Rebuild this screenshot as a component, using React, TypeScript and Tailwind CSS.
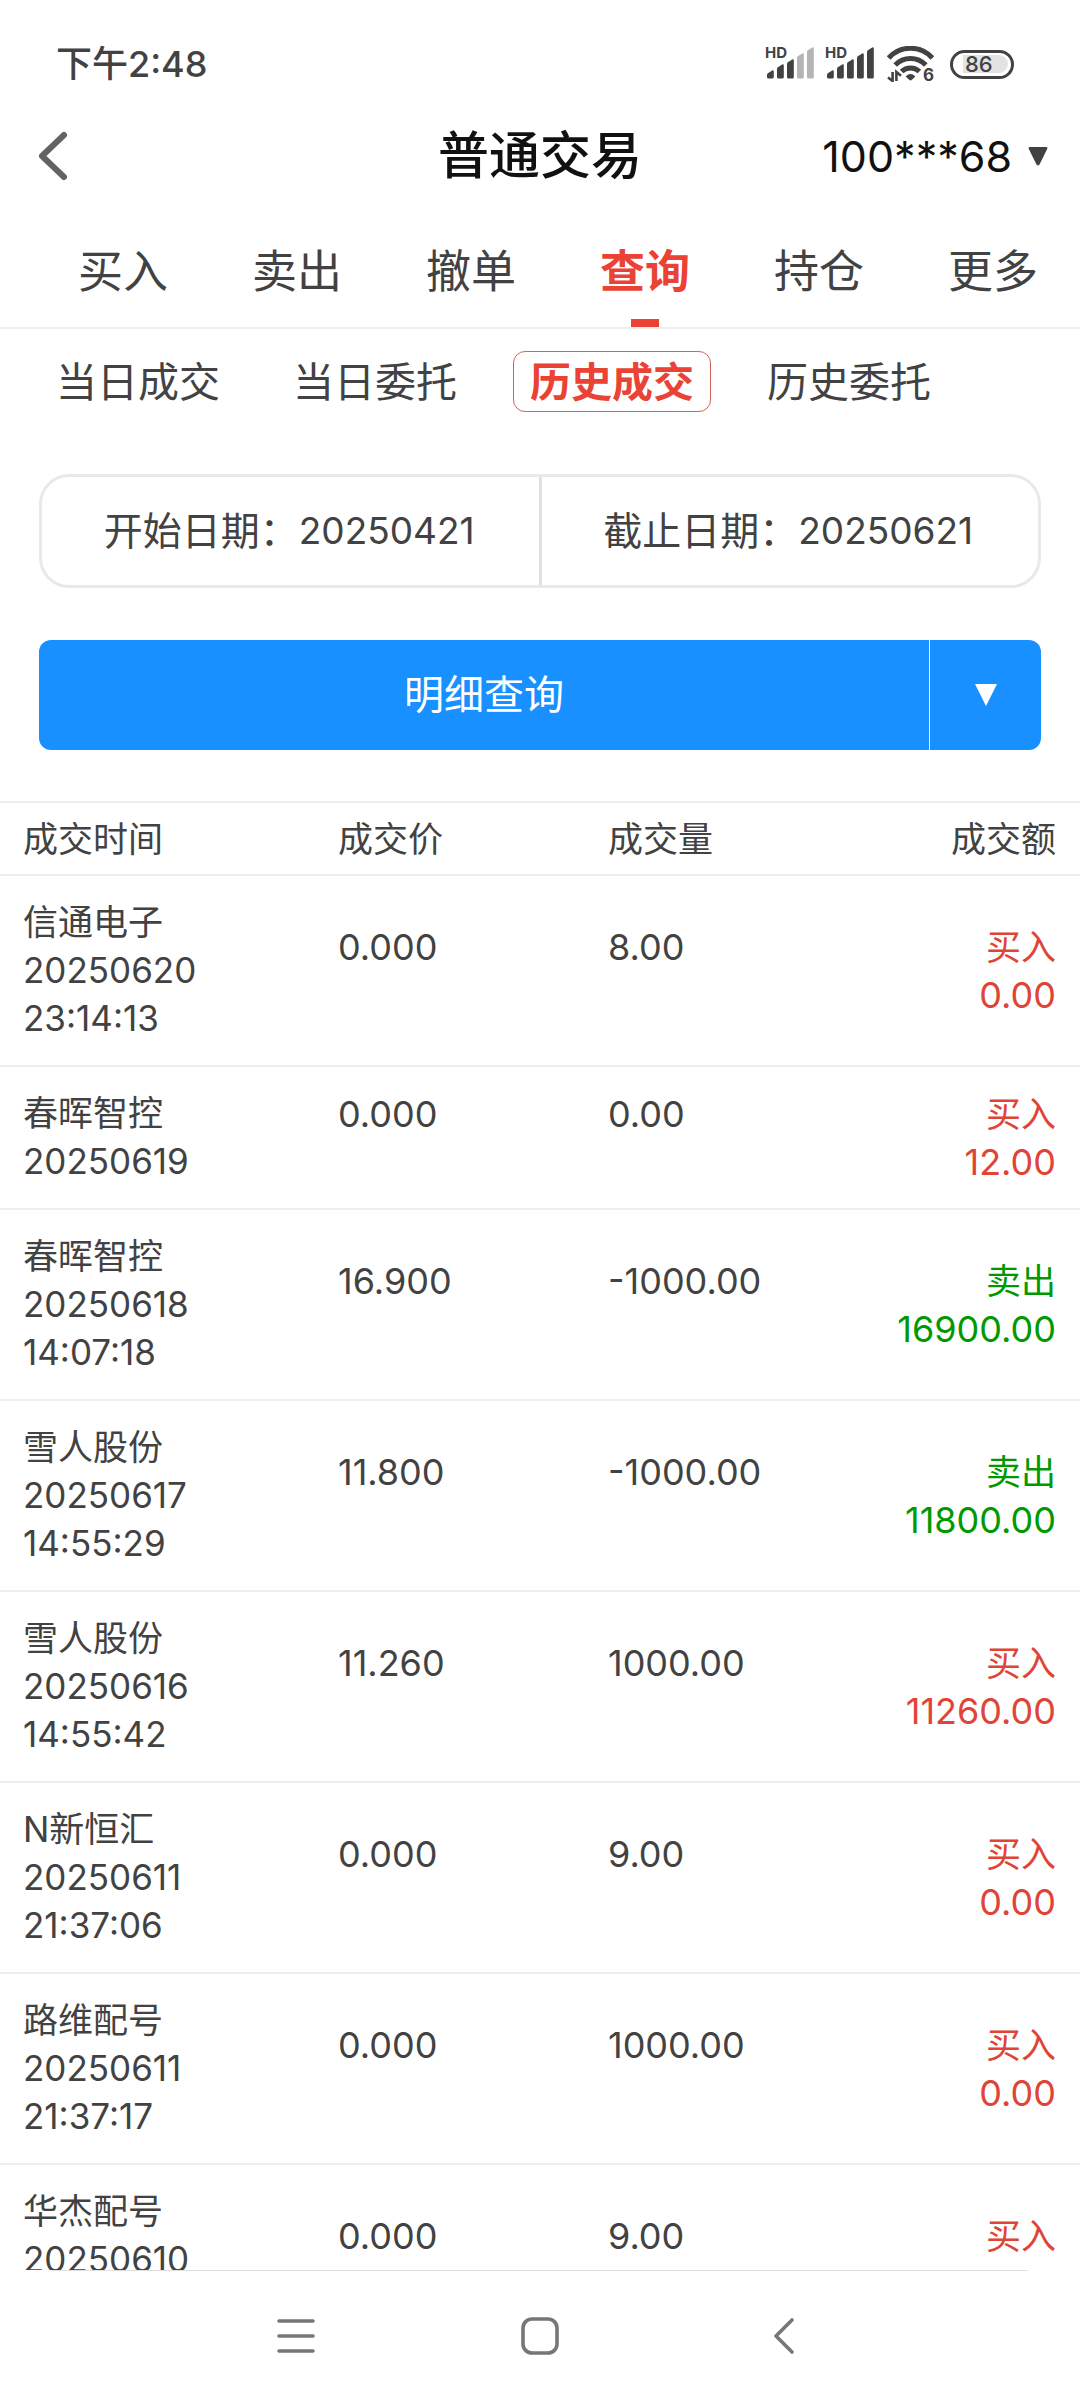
import React from 'react';

type Side = 'buy' | 'sell';

interface Trade {
  name: string;
  date: string;
  time?: string;
  price: string;
  volume: string;
  side: Side;
  amount: string;
}

const MAIN_TABS = ['买入', '卖出', '撤单', '查询', '持仓', '更多'];
const SUB_TABS = ['当日成交', '当日委托', '历史成交', '历史委托'];

const TRADES: Trade[] = [
  { name: '信通电子', date: '20250620', time: '23:14:13', price: '0.000', volume: '8.00', side: 'buy', amount: '0.00' },
  { name: '春晖智控', date: '20250619', price: '0.000', volume: '0.00', side: 'buy', amount: '12.00' },
  { name: '春晖智控', date: '20250618', time: '14:07:18', price: '16.900', volume: '-1000.00', side: 'sell', amount: '16900.00' },
  { name: '雪人股份', date: '20250617', time: '14:55:29', price: '11.800', volume: '-1000.00', side: 'sell', amount: '11800.00' },
  { name: '雪人股份', date: '20250616', time: '14:55:42', price: '11.260', volume: '1000.00', side: 'buy', amount: '11260.00' },
  { name: 'N新恒汇', date: '20250611', time: '21:37:06', price: '0.000', volume: '9.00', side: 'buy', amount: '0.00' },
  { name: '路维配号', date: '20250611', time: '21:37:17', price: '0.000', volume: '1000.00', side: 'buy', amount: '0.00' },
  { name: '华杰配号', date: '20250610', time: '21:36:42', price: '0.000', volume: '9.00', side: 'buy', amount: '0.00' },
];

function Signal({ level }: { level: number }) {
  const bars = [
    { x: 2, top: 24 },
    { x: 12, top: 18 },
    { x: 22, top: 13 },
    { x: 32, top: 7 },
    { x: 42, top: 1 },
  ];
  return (
    <span className="relative block h-9 w-[50px]">
      <svg viewBox="0 0 50 36" className="h-9 w-[50px]" aria-hidden="true">
        {bars.map((b, i) => (
          <path
            key={b.x}
            d={`M${b.x} ${b.top + 5} Q${b.x} ${b.top + 3.6} ${b.x + 1.2} ${b.top + 3} L${b.x + 5.2} ${b.top + 0.4} Q${b.x + 6.8} ${b.top} ${b.x + 6.8} ${b.top + 1.6} V31 Q${b.x + 6.8} 32.5 ${b.x + 5.3} 32.5 H${b.x + 1.5} Q${b.x} 32.5 ${b.x} 31 Z`}
            fill={i < level ? '#424242' : '#b4b4b4'}
          />
        ))}
      </svg>
      <span className="absolute left-0 top-0 text-[15px] font-bold leading-[14px] text-[#424242]">HD</span>
    </span>
  );
}

function Wifi() {
  return (
    <span className="relative block h-9 w-[47px]">
      <svg viewBox="0 0 47 36" className="h-9 w-[47px]" fill="none" stroke="#424242" strokeWidth="5" aria-hidden="true">
        <path d="M1.6 12 A29.5 29.5 0 0 1 45.4 12" />
        <path d="M8.2 19 A21 21 0 0 1 38.8 19" />
        <path d="M14.6 25.6 A12.5 12.5 0 0 1 32.4 25.6" />
        <path d="M18.6 30.4 Q23.5 25.6 28.4 30.4 L24.6 34 Q23.5 34.8 22.4 34 Z" fill="#424242" stroke="none" />
        <path d="M5.6 26 V35 L1 31.4 M9.4 35 V26 L14 29.8" strokeWidth="2.6" />
      </svg>
      <span className="absolute bottom-0 right-0 text-[17px] font-bold leading-[14px] text-[#424242]">6</span>
    </span>
  );
}

function Battery() {
  return (
    <span className="relative flex h-[29px] w-16 items-center rounded-full border-[3px] border-[#424242] pl-[10px]">
      <span className="flex h-[18px] w-[45px] items-center rounded-r-full bg-[#e3e3e3] pl-[2px] text-[22px] font-medium leading-none text-[#424242]">
        86
      </span>
    </span>
  );
}

function DateField({ id, label, value }: { id: string; label: string; value: string }) {
  return (
    <div className="flex flex-1 items-center justify-center border-[#e0e0e0] first:border-r-[3px]">
      <label htmlFor={id}>{label}：</label>
      <input
        id={id}
        type="text"
        readOnly
        defaultValue={value}
        className="w-[178px] bg-transparent text-[37px] outline-none"
      />
    </div>
  );
}

export default function App() {
  return (
    <div className="flex h-screen flex-col overflow-hidden bg-white font-['Inter','Noto_Sans_CJK_SC',sans-serif] text-[#424242]">
      <div className="flex h-[104px] shrink-0 items-center justify-between pl-14 pr-[66px] pt-6">
        <span className="text-[36px] font-medium leading-[44px]">下午2:48</span>
        <div className="flex items-center">
          <Signal level={3} />
          <span className="ml-[10px]"><Signal level={5} /></span>
          <span className="ml-3"><Wifi /></span>
          <span className="ml-4"><Battery /></span>
        </div>
      </div>

      <header className="grid h-[104px] shrink-0 grid-cols-[1fr_auto_1fr] items-center px-8">
        <button type="button" aria-label="返回" className="justify-self-start p-1">
          <svg viewBox="0 0 36 52" className="h-[52px] w-9" fill="none" stroke="#636363" strokeWidth="6" strokeLinecap="round" strokeLinejoin="round" aria-hidden="true">
            <path d="M28 5 L6 26 L28 47" />
          </svg>
        </button>
        <h1 className="text-[51px] font-medium leading-[60px] text-[#111111]">普通交易</h1>
        <button type="button" className="flex items-center gap-4 justify-self-end text-[43px] leading-[52px] text-[#111111]">
          100***68
          <svg viewBox="0 0 20 20" className="size-5" aria-hidden="true">
            <path d="M2 1 H18 Q20 1 19.2 3 L11.5 18.5 Q10 20.5 8.5 18.5 L0.8 3 Q0 1 2 1 Z" fill="#424242" />
          </svg>
        </button>
      </header>

      <nav className="grid h-[121px] shrink-0 grid-cols-6 border-b-2 border-[#eeeeee] pl-9">
        {MAIN_TABS.map((tab) => {
          const active = tab === '查询';
          return (
            <button
              key={tab}
              type="button"
              className={
                active
                  ? 'relative flex items-center justify-center pt-2 text-[45px] font-bold text-[#ea4335]'
                  : 'relative flex items-center justify-center pt-2 text-[45px]'
              }
            >
              {tab}
              {active && <span className="absolute bottom-0 left-1/2 h-2 w-7 -translate-x-1/2 bg-[#ea4335]" />}
            </button>
          );
        })}
      </nav>

      <div className="flex shrink-0 gap-[39px] px-[39px] pt-[22px]">
        {SUB_TABS.map((tab) => (
          <button
            key={tab}
            type="button"
            className={
              tab === '历史成交'
                ? 'h-[61px] rounded-xl border border-[#d2625a] px-4 text-[41px] font-bold leading-[56px] text-[#ea4335]'
                : 'h-[61px] rounded-xl border border-transparent px-4 text-[41px] leading-[56px]'
            }
          >
            {tab}
          </button>
        ))}
      </div>

      <div className="mx-[39px] mt-[62px] flex h-[114px] shrink-0 rounded-[30px] border-[3px] border-[#e9e9e9] text-[39px]">
        <DateField id="start-date" label="开始日期" value="20250421" />
        <DateField id="end-date" label="截止日期" value="20250621" />
      </div>

      <div className="mx-[39px] mt-[52px] flex h-[110px] shrink-0 divide-x divide-white overflow-hidden rounded-xl bg-[#1890ff] text-white">
        <button type="button" className="flex-1 text-[40px]">明细查询</button>
        <button type="button" aria-label="展开" className="flex w-[111px] items-center justify-center">
          <svg viewBox="0 0 22 22" className="size-[22px]" aria-hidden="true">
            <path d="M0 0 H22 L11 22 Z" fill="#ffffff" />
          </svg>
        </button>
      </div>

      <div className="mt-[51px] min-h-0 flex-1 overflow-y-auto [scrollbar-width:none]">
        <table className="w-full table-fixed border-collapse text-[35px] leading-[48px]">
          <colgroup>
            <col className="w-[338px]" />
            <col className="w-1/4" />
            <col className="w-1/5" />
            <col />
          </colgroup>
          <thead>
            <tr className="h-[73px] border-y-2 border-[#eeeeee] text-left">
              <th scope="col" className="pl-[23px] font-normal">成交时间</th>
              <th scope="col" className="font-normal">成交价</th>
              <th scope="col" className="font-normal">成交量</th>
              <th scope="col" className="pr-6 text-right font-normal">成交额</th>
            </tr>
          </thead>
          <tbody>
            {TRADES.map((t) => (
              <tr key={t.name + t.date} className="border-b-2 border-[#eeeeee]">
                <td className="pb-[23px] pl-[23px] pt-[22px]">
                  <div>{t.name}</div>
                  <div>{t.date}</div>
                  {t.time && <div>{t.time}</div>}
                </td>
                <td>
                  <div className="min-h-24 text-[36px]">{t.price}</div>
                </td>
                <td>
                  <div className="min-h-24 text-[36px]">{t.volume}</div>
                </td>
                <td className={t.side === 'buy' ? 'pr-6 text-right text-[#e04436]' : 'pr-6 text-right text-[#009900]'}>
                  <div>{t.side === 'buy' ? '买入' : '卖出'}</div>
                  <div className="text-[36px]">{t.amount}</div>
                </td>
              </tr>
            ))}
          </tbody>
        </table>
      </div>

      <footer className="shrink-0">
        <div className="mx-[52px] h-px bg-[#e0e0e0]" />
        <div className="flex h-[129px] items-center justify-center gap-[204px]">
          <button type="button" aria-label="最近任务">
            <svg viewBox="0 0 40 40" className="size-10" stroke="#777777" strokeWidth="3.6" strokeLinecap="round" aria-hidden="true">
              <path d="M3 5 H37 M3 20 H37 M3 35 H37" />
            </svg>
          </button>
          <button type="button" aria-label="主屏幕">
            <svg viewBox="0 0 40 40" className="size-10" fill="none" stroke="#777777" strokeWidth="3.6" aria-hidden="true">
              <rect x="3" y="3" width="34" height="34" rx="9" />
            </svg>
          </button>
          <button type="button" aria-label="后退">
            <svg viewBox="0 0 40 40" className="size-10" fill="none" stroke="#777777" strokeWidth="3.6" strokeLinecap="round" strokeLinejoin="round" aria-hidden="true">
              <path d="M28 4 L12 20 L28 36" />
            </svg>
          </button>
        </div>
      </footer>
    </div>
  );
}
